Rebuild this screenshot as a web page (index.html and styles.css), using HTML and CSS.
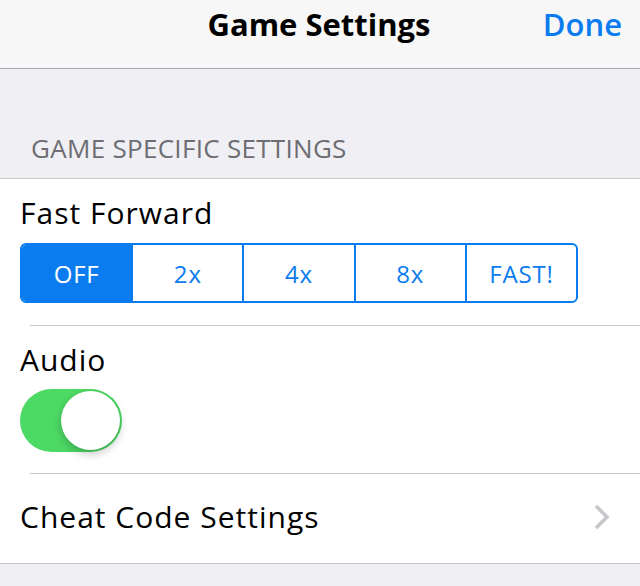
FILE: index.html
```html
<!DOCTYPE html>
<html>
<head>
<meta charset="utf-8">
<link rel="stylesheet" href="styles.css">
</head>
<body>
<header class="nav">
  <div class="nav-title">Game Settings</div>
  <div class="nav-done">Done</div>
</header>
<div class="section-header">GAME SPECIFIC SETTINGS</div>
<div class="group">
  <div class="row row-ff">
    <div class="label">Fast Forward</div>
    <div class="segmented">
      <div class="seg seg-on">OFF</div>
      <div class="seg">2x</div>
      <div class="seg">4x</div>
      <div class="seg">8x</div>
      <div class="seg">FAST!</div>
    </div>
  </div>
  <div class="row row-audio">
    <div class="label">Audio</div>
    <div class="switch"><div class="knob"></div></div>
  </div>
  <div class="row row-cheat">
    <div class="label">Cheat Code Settings</div>
    <svg class="chevron" width="20" height="30" viewBox="0 0 20 30"><polyline points="4,4 15,15 4,26" fill="none" stroke="#c7c7cc" stroke-width="3.6"/></svg>
  </div>
</div>
</body>
</html>
```
FILE: styles.css
```css
html, body {
  margin: 0;
  padding: 0;
  background: #efeff4;
  font-family: "Open Sans", "Noto Sans", sans-serif;
}
.nav {
  height: 68px;
  background: #f7f7f7;
  border-bottom: 1px solid #a9a9ab;
  position: relative;
  display: flex;
  align-items: center;
  justify-content: center;
}
.nav-title {
  font-size: 31px;
  font-weight: 700;
  color: #000;
  margin-top: -20px;
  margin-left: -2px;
}
.nav-done {
  position: absolute;
  right: 18px;
  top: 3px;
  font-size: 31px;
  font-weight: 600;
  color: #0a7cf0;
}
.section-header {
  height: 110px;
  box-sizing: border-box;
  padding: 61px 0 0 31px;
  font-size: 26px;
  color: #6d6d72;
  border-bottom: 1px solid #c8c7cc;
  letter-spacing: 0.3px;
}
.group {
  background: #fff;
  border-bottom: 1px solid #c8c7cc;
}
.row {
  margin-left: 30px;
  position: relative;
}
.row + .row {
  border-top: 1px solid #c8c7cc;
}
.label {
  font-size: 30px;
  color: #000;
  margin-left: -10px;
  letter-spacing: 1px;
}
.row-ff {
  height: 146px;
  box-sizing: border-box;
  padding-top: 13px;
}
.segmented {
  margin-left: -10px;
  margin-top: 10px;
  width: 558px;
  height: 60px;
  box-sizing: border-box;
  border: 2px solid #0a7cf0;
  border-radius: 6px;
  display: flex;
  overflow: hidden;
}
.seg {
  flex: 1;
  display: flex;
  align-items: center;
  justify-content: center;
  font-size: 24px;
  letter-spacing: 0.8px;
  color: #0a7cf0;
}
.seg + .seg {
  border-left: 2px solid #0a7cf0;
}
.seg-on {
  background: #0a7cf0;
  color: #fff;
}
.row-audio {
  height: 148px;
  box-sizing: border-box;
  padding-top: 13px;
}
.switch {
  margin-left: -10px;
  margin-top: 9px;
  width: 102px;
  height: 63px;
  border-radius: 32px;
  background: #4cd964;
  position: relative;
}
.knob {
  position: absolute;
  right: 2px;
  top: 2px;
  width: 59px;
  height: 59px;
  border-radius: 50%;
  background: #fff;
  box-shadow: 0 4px 8px rgba(0,0,0,0.22), 0 0 1px rgba(0,0,0,0.15);
}
.row-cheat {
  height: 90px;
  box-sizing: border-box;
  padding-bottom: 4px;
  display: flex;
  align-items: center;
  justify-content: space-between;
}
.chevron {
  margin-right: 28px;
}
```
